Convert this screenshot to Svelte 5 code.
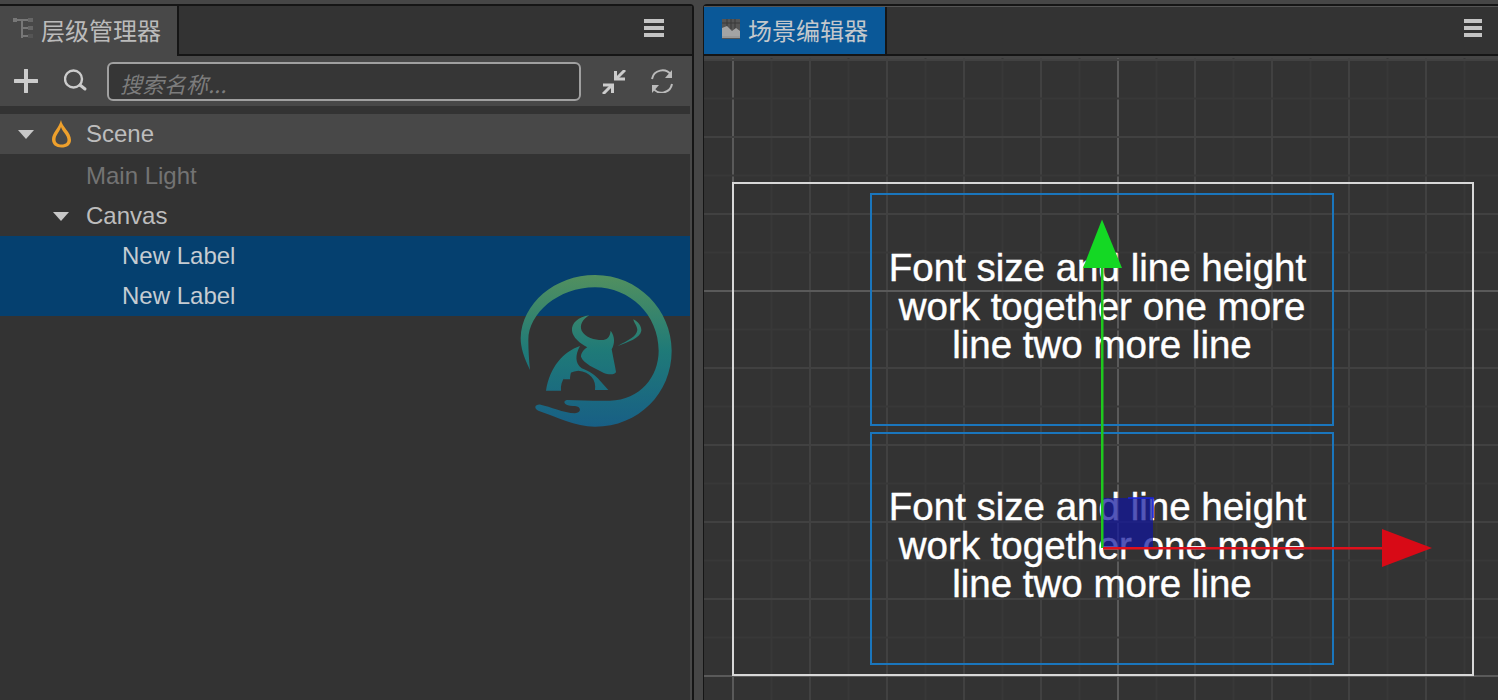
<script lang="ts">
	const rows = [
		{ name: 'Main Light', indent: 86, dim: true },
		{ name: 'Canvas', indent: 86, open: true },
		{ name: 'New Label', indent: 122, selected: true },
		{ name: 'New Label', indent: 122, selected: true }
	];

	// grid of the scene view, in page coordinates
	const step = 77;
	const vLines: { x: number; kind: string }[] = [];
	for (let i = 0; i < 20; i++) {
		const x = 733 + (i * step) / 2;
		vLines.push({ x, kind: i % 10 === 0 ? 'major' : i % 2 === 0 ? 'mid' : 'minor' });
	}
	const hLines: { y: number; kind: string }[] = [];
	for (let i = -6; i < 14; i++) {
		const y = 291 + (i * step) / 2;
		hLines.push({ y, kind: i % 10 === 0 ? 'major' : i % 2 === 0 ? 'mid' : 'minor' });
	}

	const labels = [
		{ top: 281, lines: [[1097.5, 'Font size and line height'], [1102, 'work together one more'], [1102, 'line two more line']] },
		{ top: 520, lines: [[1097.5, 'Font size and line height'], [1102, 'work together one more'], [1102, 'line two more line']] }
	];
</script>

<div class="page">
	<section class="panel left">
		<header class="tabbar">
			<div class="tab">
				<svg class="tab-icon" viewBox="0 0 22 24" width="22" height="24">
					<path d="M1 3h18M10 3v18M10 11h8M10 19h8" stroke="#777" stroke-width="2" fill="none" />
					<rect x="1" y="1" width="4" height="4" fill="#777" />
					<rect x="16" y="1" width="5" height="4" fill="#666" />
					<rect x="16" y="9" width="5" height="4" fill="#666" />
					<rect x="16" y="17" width="5" height="4" fill="#555" />
				</svg>
				<span>层级管理器</span>
			</div>
			<div class="menu"><i></i><i></i><i></i></div>
		</header>
		<div class="toolbar">
			<svg class="plus" viewBox="0 0 24 24" width="24" height="24">
				<path d="M12 1v22M1 12h22" stroke="#ccc" stroke-width="4" stroke-linecap="round" />
			</svg>
			<svg class="search" viewBox="0 0 24 24" width="24" height="24">
				<circle cx="9.500" cy="10" r="8.500" stroke="#ccc" stroke-width="2.400" fill="none" />
				<path d="M16 16l5 4" stroke="#ccc" stroke-width="3" stroke-linecap="round" />
			</svg>
			<div class="input">搜索名称...</div>
			<svg class="compress" viewBox="0 0 24 24" width="24" height="24">
				<path d="M23 0l-8 8M1 24l8-8" stroke="#ccc" stroke-width="3" fill="none" />
				<path d="M12 1h3v6.500h8v3H12zM12 23h-3v-6.500H1v-3h11z" fill="#ccc" />
			</svg>
			<svg class="refresh" viewBox="0 0 24 24" width="24" height="24">
				<path d="M2 10A10.500 10.500 0 0 1 21 6M22 15A10.500 10.500 0 0 1 3 19" stroke="#bbb" stroke-width="2" fill="none" />
				<path d="M22 1v8h-7zM2 24v-8h7z" fill="#bbb" />
			</svg>
		</div>
		<div class="tree">
			<div class="row scene">
				<span class="arrow"></span>
				<svg class="drop" viewBox="0 0 24 30" width="24" height="30">
					<path d="M11 1C12 8 21 13 21 21C21 26 17 28.500 11.500 28.500C6 28.500 2 25.500 2 20.500C2 14 9 9 11 1ZM11 8C9.500 13 5.500 16 5.500 20.500C5.500 24 8 25.500 11.500 25.500C15 25.500 17.500 24 17.500 21C17.500 16 12.500 13 11 8Z" fill="#eea02c" fill-rule="evenodd" />
				</svg>
				<span>Scene</span>
			</div>
			{#each rows as r}
				<div class="row" class:selected={r.selected} class:dim={r.dim} style="padding-left: {r.indent}px">
					{#if r.open}<span class="arrow nested"></span>{/if}
					<span>{r.name}</span>
				</div>
			{/each}
		</div>
	</section>

	<section class="panel right">
		<header class="tabbar">
			<div class="tab active">
				<svg class="tab-icon" viewBox="0 0 20 22" width="20" height="22">
					<rect x="1" y="1" width="18" height="20" fill="#555" />
					<path d="M6 1v10M10 1v10M14 1v10M1 5h18" stroke="#3a3a3a" stroke-width="1" />
					<path d="M1 18V10L6 8L11 13L15 10L19 13V18Z" fill="#a4a4a4" />
					<rect x="1" y="18" width="18" height="2" fill="#999" />
				</svg>
				<span>场景编辑器</span>
			</div>
			<div class="menu"><i></i><i></i><i></i></div>
		</header>
		<svg class="viewport" viewBox="704 56 794 644" width="794" height="644">
			<rect x="704" y="56" width="794" height="4" fill="#454545" />
			{#each vLines as l}
				<line class={l.kind} x1={l.x} x2={l.x} y1="58" y2="700" />
			{/each}
			{#each hLines as l}
				<line class={l.kind} x1="704" x2="1498" y1={l.y} y2={l.y} />
			{/each}

			<rect x="733" y="183" width="740" height="492" fill="none" stroke="#d8d8d8" stroke-width="2" />
			<rect x="871" y="194" width="462" height="231" fill="none" stroke="#1a76bd" stroke-width="2" />
			<rect x="871" y="433" width="462" height="231" fill="none" stroke="#1a76bd" stroke-width="2" />

			{#each labels as block}
				{#each block.lines as line, i}
					<text x={line[0]} y={block.top + i * 38.500} class="label">{line[1]}</text>
				{/each}
			{/each}

			<rect x="1103" y="498" width="50" height="50" fill="#10159c" fill-opacity="0.72" />
			<path d="M1128 498H1153V518" fill="none" stroke="#1a25e0" stroke-width="1.500" />
			<rect x="1101" y="262" width="2.500" height="286" fill="#1ec81e" />
			<rect x="1103" y="547" width="280" height="2.500" fill="#e0101c" />
			<path d="M1102 219.500L1122 268H1083Z" fill="#14d824" />
			<path d="M1382 529L1432 548L1382 567Z" fill="#d80a16" />
		</svg>
	</section>

	<svg class="logo" viewBox="0 0 720 540" width="240" height="180">
		<defs>
			<linearGradient id="logo-fill" gradientUnits="userSpaceOnUse" x1="0" y1="45" x2="0" y2="500">
				<stop offset="0" stop-color="#52905f" />
				<stop offset="0.500" stop-color="#1f7a78" />
				<stop offset="1" stop-color="#185f85" />
			</linearGradient>
		</defs>
		<g fill="url(#logo-fill)">
			<path d="M90 330C70 290 62 260 62 235C65 130 165 45 285 45C415 45 515 150 515 272C515 400 415 500 285 500C225 500 170 470 115 452C100 445 105 432 122 434C150 440 190 458 225 460C245 458 245 440 225 438C195 440 185 425 200 420C240 420 290 424 330 422C420 420 476 350 476 272C476 165 390 82 285 82C175 82 85 160 85 240C85 270 87 300 90 330Z" />
			<path d="M138 392C150 320 190 275 240 258C225 285 225 310 245 325C270 335 285 345 300 362L325 390H285C290 360 270 335 235 332C200 335 180 360 183 392Z" />
			<path d="M268 166C248 178 238 195 245 212C255 232 285 240 305 240C320 240 330 232 332 212C345 230 345 250 335 268C340 295 345 318 348 336C345 345 325 345 310 338C285 325 250 310 243 290C243 278 252 268 262 262C240 250 218 232 216 212C214 190 235 170 268 166Z" />
			<path d="M400 178C415 185 425 200 424 212C420 235 385 245 353 258C385 240 410 230 412 210C412 198 402 190 400 178Z" />
			<path d="M215 330C200 335 192 345 192 358L210 358C210 348 212 340 215 330Z" />
		</g>
	</svg>
</div>

<style>
	:global(body) {
		margin: 0;
		background: #464646;
	}

	.page {
		position: relative;
		width: 1498px;
		height: 700px;
		overflow: hidden;
		display: flex;
		gap: 9px;
		padding-top: 4px;
		box-sizing: border-box;
		font-family: 'Liberation Sans', 'Noto Sans CJK SC', sans-serif;
		color: #bdbdbd;
	}

	.panel {
		display: flex;
		flex-direction: column;
		background: #333;
		border-top: 2px solid #151515;
		box-sizing: border-box;
		min-width: 0;
	}

	.left {
		width: 694px;
		border-right: 2px solid #151515;
		border-top-right-radius: 4px;
	}

	.right {
		flex: 1;
		border-left: 1px solid #151515;
		border-top-left-radius: 4px;
	}

	.tabbar {
		height: 50px;
		flex: none;
		display: flex;
		justify-content: space-between;
		align-items: flex-start;
		box-sizing: border-box;
		border-bottom: 2px solid #151515;
		background: #333;
	}

	.right .tabbar {
		box-shadow: inset 0 1px 0 #555;
	}

	.tab {
		height: 50px;
		width: 179px;
		box-sizing: border-box;
		display: flex;
		align-items: center;
		padding: 0 0 4px 12px;
		gap: 7px;
		background: #484848;
		border-right: 2px solid #151515;
		font-family: 'Noto Sans CJK SC', sans-serif;
		font-size: 24px;
		color: #bbb;
	}

	.tab.active {
		width: 183px;
		height: 47px;
		margin-top: 1px;
		padding: 0 0 3px 17px;
		gap: 7px;
		background: #0a5898;
		color: #c4c8cc;
	}

	.menu {
		display: flex;
		flex-direction: column;
		gap: 3.500px;
		width: 20px;
		margin: 13px 28px 0 0;
	}

	.right .menu {
		width: 18px;
		margin: 13px 16px 0 0;
	}

	.menu i {
		display: block;
		height: 3.500px;
		background: #c4c4c4;
	}

	.toolbar {
		height: 50px;
		flex: none;
		display: flex;
		align-items: center;
		background: #484848;
		box-sizing: border-box;
		padding-left: 14px;
	}

	.plus {
		margin-right: 26px;
	}

	.search {
		margin-right: 19px;
		margin-top: -1px;
	}

	.input {
		width: 474px;
		height: 39px;
		box-sizing: border-box;
		border: 2px solid #a0a0a0;
		border-radius: 6px;
		background: #363636;
		color: #7c7c7c;
		font-family: 'Noto Sans CJK SC', sans-serif;
		font-style: italic;
		font-size: 22px;
		line-height: 38px;
		padding-left: 11px;
		margin-right: 21px;
	}

	.compress {
		margin-right: 24px;
		margin-top: 1px;
	}

	.tree {
		flex: 1;
		padding-top: 8px;
		font-size: 24px;
		border-right: 2px solid #484848;
	}

	.row {
		height: 40px;
		display: flex;
		align-items: center;
		position: relative;
	}

	.row.scene {
		background: #484848;
		padding-left: 18px;
		margin-bottom: 2px;
	}

	.row.selected {
		background: #05406f;
		color: #c6ccd2;
	}

	.row.dim {
		color: #737373;
	}

	.arrow {
		width: 0;
		height: 0;
		border-left: 8.500px solid transparent;
		border-right: 8.500px solid transparent;
		border-top: 9px solid #c8c8c8;
		margin-right: 16px;
	}

	.arrow.nested {
		position: absolute;
		left: 53px;
		margin: 0;
	}

	.drop {
		margin-right: 12px;
		margin-top: -1px;
	}

	.viewport {
		display: block;
		flex: none;
		background: #333;
	}

	.viewport line {
		stroke-width: 2;
	}

	.viewport line.minor {
		stroke: #383838;
	}

	.viewport line.mid {
		stroke: #414141;
	}

	.viewport line.major {
		stroke: #5a5a5a;
	}

	.label {
		font-family: 'Liberation Sans', sans-serif;
		font-size: 38.500px;
		fill: #fff;
		stroke: #fff;
		stroke-width: 0.400px;
		text-anchor: middle;
	}

	.logo {
		position: absolute;
		left: 500px;
		top: 260px;
	}
</style>
